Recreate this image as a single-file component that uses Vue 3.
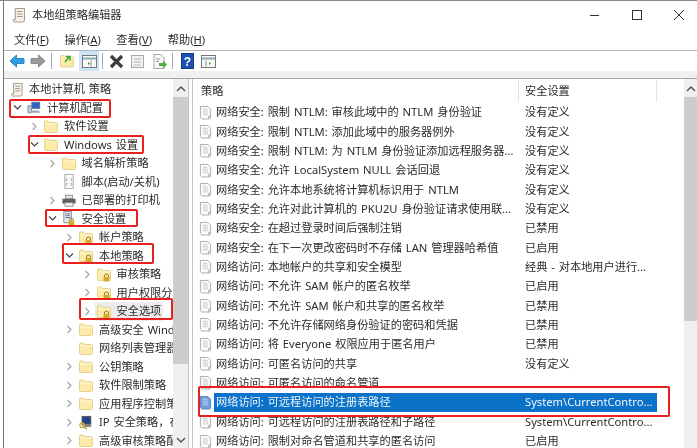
<script setup>
const menus = [['文件(', 'F'], ['操作(', 'A'], ['查看(', 'V'], ['帮助(', 'H']]
const tree = [
  { t: '本地计算机 策略', l: 0, c: '', i: 'scroll' },
  { t: '计算机配置', l: 1, c: 'd', i: 'pc' },
  { t: '软件设置', l: 2, c: 'r', i: 'folder' },
  { t: 'Windows 设置', l: 2, c: 'd', i: 'folder' },
  { t: '域名解析策略', l: 3, c: 'r', i: 'folder' },
  { t: '脚本(启动/关机)', l: 3, c: '', i: 'script' },
  { t: '已部署的打印机', l: 3, c: 'r', i: 'printer' },
  { t: '安全设置', l: 3, c: 'd', i: 'secdoc' },
  { t: '帐户策略', l: 4, c: 'r', i: 'lockfolder' },
  { t: '本地策略', l: 4, c: 'd', i: 'lockfolder' },
  { t: '审核策略', l: 5, c: 'r', i: 'lockfolder' },
  { t: '用户权限分配', l: 5, c: 'r', i: 'lockfolder' },
  { t: '安全选项', l: 5, c: 'r', i: 'lockfolder', sel: true },
  { t: '高级安全 Windows Defender 防火墙', l: 4, c: 'r', i: 'folder' },
  { t: '网络列表管理器策略', l: 4, c: '', i: 'folder' },
  { t: '公钥策略', l: 4, c: 'r', i: 'folder' },
  { t: '软件限制策略', l: 4, c: 'r', i: 'folder' },
  { t: '应用程序控制策略', l: 4, c: 'r', i: 'folder' },
  { t: 'IP 安全策略，在 本地计算机', l: 4, c: 'r', i: 'ipsec' },
  { t: '高级审核策略配置', l: 4, c: 'r', i: 'folder' }
]
const rows = [
  ['网络安全: 限制 NTLM: 审核此域中的 NTLM 身份验证', '没有定义'],
  ['网络安全: 限制 NTLM: 添加此域中的服务器例外', '没有定义'],
  ['网络安全: 限制 NTLM: 为 NTLM 身份验证添加远程服务器...', '没有定义'],
  ['网络安全: 允许 LocalSystem NULL 会话回退', '没有定义'],
  ['网络安全: 允许本地系统将计算机标识用于 NTLM', '没有定义'],
  ['网络安全: 允许对此计算机的 PKU2U 身份验证请求使用联...', '没有定义'],
  ['网络安全: 在超过登录时间后强制注销', '已禁用'],
  ['网络安全: 在下一次更改密码时不存储 LAN 管理器哈希值', '已启用'],
  ['网络访问: 本地帐户的共享和安全模型', '经典 - 对本地用户进行...'],
  ['网络访问: 不允许 SAM 帐户的匿名枚举', '已启用'],
  ['网络访问: 不允许 SAM 帐户和共享的匿名枚举', '已禁用'],
  ['网络访问: 不允许存储网络身份验证的密码和凭据', '已禁用'],
  ['网络访问: 将 Everyone 权限应用于匿名用户', '已禁用'],
  ['网络访问: 可匿名访问的共享', '没有定义'],
  ['网络访问: 可匿名访问的命名管道', ''],
  ['网络访问: 可远程访问的注册表路径', 'System\\CurrentContro...', true],
  ['网络访问: 可远程访问的注册表路径和子路径', 'System\\CurrentContro...'],
  ['网络访问: 限制对命名管道和共享的匿名访问', '已启用']
]
const marks = ['m1', 'm2', 'm3', 'm4', 'm5', 'm6']
</script>

<template>
  <div class="win">
    <svg class="defs" width="0" height="0">
      <defs>
        <symbol id="scroll" viewBox="0 0 14 16">
          <path d="M3 1.500h9.500v11.500a2 2 0 0 1-2 2H2.500a1.500 1.500 0 0 1-1-2.500h2z" fill="#f6f1e4" stroke="#a39c8c"/>
          <path d="M5 4.500h5.500M5 7h5.500M5 9.500h5.500" stroke="#a39c8c"/>
        </symbol>
        <symbol id="folder" viewBox="0 0 14 14">
          <path d="M.5 2.500a1 1 0 0 1 1-1h3l1.500 1.500h6.500a1 1 0 0 1 1 1v8a1 1 0 0 1-1 1h-11a1 1 0 0 1-1-1z" fill="#fdeaa8" stroke="#e6d290"/>
          <path d="M1 4.500h12" stroke="#fff8d8"/>
        </symbol>
        <symbol id="lockfolder" viewBox="0 0 14 14">
          <use href="#folder"/>
          <path d="M7.500 10v-1.500a2 2 0 0 1 4 0V10" fill="none" stroke="#8c7c34"/>
          <rect x="6.500" y="9.500" width="6" height="4.500" fill="#d6a928"/>
        </symbol>
        <symbol id="pc" viewBox="0 0 16 14">
          <rect x="5.500" y="1" width="9" height="7" fill="#2f63c8" stroke="#5a6f9a"/>
          <path d="M1 5h4v8H1z" fill="#c4ccd8" stroke="#7a8698"/>
          <path d="M5 13h10l-1.500-2.500H6z" fill="#9aa7bb"/>
        </symbol>
        <symbol id="script" viewBox="0 0 14 16">
          <path d="M2.500.5h9v15h-9z" fill="#fafafa" stroke="#a8a8a8"/>
          <path d="M5 4.500 4 6l1 1.500M9 4.500 10 6 9 7.500M5 9.500 4 11l1 1.500M9 9.500l1 1.500-1 1.500" fill="none" stroke="#8a8a8a"/>
        </symbol>
        <symbol id="printer" viewBox="0 0 16 14">
          <rect x="4" y="1" width="8" height="4" fill="#e6e6e6" stroke="#8a8a8a"/>
          <rect x=".5" y="5" width="15" height="5.500" fill="#5b6068"/>
          <rect x="3.500" y="9.500" width="9" height="4" fill="#f4f4f4" stroke="#8a8a8a"/>
        </symbol>
        <symbol id="secdoc" viewBox="0 0 14 16">
          <path d="M1.500.5h8v12h-8z" fill="#e8ecf2" stroke="#7d8798"/>
          <path d="M3 3h5M3 5h5M3 7h5" stroke="#5f6d84"/>
          <path d="M7.500 11v-1.500a2 2 0 0 1 4 0V11" fill="none" stroke="#8c7c34"/>
          <rect x="6.500" y="10.500" width="6" height="5" fill="#d6a928"/>
        </symbol>
        <symbol id="ipsec" viewBox="0 0 16 16">
          <rect x="3.500" y="1" width="10" height="9" fill="#27408b" stroke="#555"/>
          <path d="M4 11h10v2H4z" fill="#777"/>
          <circle cx="3.500" cy="11" r="2.500" fill="none" stroke="#c9b22c" stroke-width="1.500"/>
          <path d="M5 12.500 9 15.500" stroke="#c9b22c" stroke-width="1.800"/>
        </symbol>
        <symbol id="policy" viewBox="0 0 14 16">
          <path d="M1.500 1.500h8l3 3v9a1.500 1.500 0 0 1-1.500 1.500H3l-1.500-1.500z" fill="#fcfcfc" stroke="#a8a8a8"/>
          <path d="M4 4.500h5M4 6.500h6M4 8.500h6M4 10.500h6" stroke="#c8c8c8"/>
          <path d="M10.500 15V12h2" fill="#ddd" stroke="#a8a8a8"/>
        </symbol>
        <symbol id="policysel" viewBox="0 0 14 16">
          <path d="M1.500 1.500h8l3 3v9a1.500 1.500 0 0 1-1.500 1.500H3l-1.500-1.500z" fill="#6f9fd8" stroke="#4f82c0"/>
          <path d="M4 4.500h5M4 6.500h6M4 8.500h6M4 10.500h6" stroke="#bcd4ee"/>
        </symbol>
      </defs>
    </svg>

    <header class="title">
      <svg width="14" height="16"><use href="#scroll"/></svg>
      <span class="t-text">本地组策略编辑器</span>
      <div class="ctrls">
        <svg width="12" height="12"><path d="M1 6.500h9" stroke="#333"/></svg>
        <svg width="12" height="12"><rect x="1.500" y="1.500" width="9" height="9" fill="none" stroke="#333"/></svg>
        <svg width="12" height="12"><path d="M1 1l10 10M11 1 1 11" stroke="#333"/></svg>
      </div>
    </header>

    <nav class="menu">
      <span v-for="m in menus" :key="m[1]">{{ m[0] }}<u>{{ m[1] }}</u>)</span>
    </nav>

    <div class="tools">
      <svg width="16" height="14"><path d="M1 7l6.500-6v3.500H15v5H7.500V13z" fill="#2f9fe0" stroke="#2a86c4"/></svg>
      <svg width="16" height="14"><path d="M15 7 8.500 1v3.500H1v5h7.500V13z" fill="#9a9a9a" stroke="#8c8c8c"/></svg>
      <i class="sep sep-a"></i>
      <svg width="14" height="14"><use href="#folder"/><path d="M5 8 9 3M6 2.500h4v4" fill="none" stroke="#3aa53a" stroke-width="1.500"/></svg>
      <span class="on"><svg width="15" height="13"><rect x=".5" y=".5" width="14" height="12" fill="#f8f8f8" stroke="#777"/><path d="M1 3.500h13" stroke="#8ab" stroke-width="2"/><path d="M9 5.500v6" stroke="#888"/><path d="M6 7v3l2-1.500z" fill="#3a9a3a"/></svg></span>
      <i class="sep sep-b"></i>
      <svg class="x" width="15" height="15"><path d="M2 2l11 11M13 2 2 13" stroke="#3c3c3c" stroke-width="3.200"/></svg>
      <svg class="prop" width="15" height="15"><rect x="1.500" y="1.500" width="12" height="12" fill="#f2f2f2" stroke="#a8a8a8"/><path d="M4 5h7M4 8h7M4 11h7" stroke="#b4b4b4"/></svg>
      <svg width="15" height="15"><path d="M2 .5h7l3 3v11H2z" fill="#f8f8f8" stroke="#a8a8a8"/><path d="M4 5h4M4 7.500h3" stroke="#999"/><path d="M7 9h4V6.500l4 4-4 4V12H7z" fill="#4cae4c"/></svg>
      <i class="sep sep-a"></i>
      <svg width="13" height="16"><rect x=".5" y=".5" width="12" height="15" fill="#1f4fb0" stroke="#173b85"/><text x="6.500" y="12.500" text-anchor="middle" font-family="Liberation Sans" font-weight="700" font-size="12" fill="#fff">?</text></svg>
      <svg class="act" width="15" height="13"><rect x=".5" y=".5" width="14" height="12" fill="#f8f8f8" stroke="#777"/><path d="M1 3.500h13" stroke="#8ab" stroke-width="2"/><path d="M5 5.500v6" stroke="#888"/><path d="M8 7v3l2-1.500z" fill="#3a9a3a"/></svg>
    </div>

    <div class="band"></div>

    <main class="panes">
      <section class="left">
        <div class="tree">
          <div v-for="n in tree" :key="n.t" class="node" :class="'lv' + n.l">
            <svg v-if="n.c" class="chev" width="9" height="9" viewBox="0 0 9 9">
              <path v-if="n.c === 'd'" d="M1 2.500 4.500 6 8 2.500" fill="none" stroke="#444" stroke-width="1.200"/>
              <path v-else d="M2.500 1 6 4.500 2.500 8" fill="none" stroke="#a6a6a6" stroke-width="1.200"/>
            </svg>
            <span v-else class="chev"></span>
            <span class="item" :class="{ picked: n.sel }">
              <svg width="14" height="15"><use :href="'#' + n.i"/></svg>
              <span class="ntext">{{ n.t }}</span>
            </span>
          </div>
        </div>
        <div class="sbar">
          <svg class="arr" width="10" height="8"><path d="M1 6 5 2l4 4" fill="none" stroke="#555" stroke-width="1.500"/></svg>
          <div class="thumb"></div>
          <svg class="arr" width="10" height="8"><path d="M1 2l4 4 4-4" fill="none" stroke="#555" stroke-width="1.500"/></svg>
        </div>
      </section>
      <div class="split"></div>
      <section class="right">
        <div class="list">
          <div class="head">
            <span class="h1">策略</span>
            <span class="h2">安全设置</span>
          </div>
          <div v-for="r in rows" :key="r[0]" class="row" :class="{ cur: r[2] }">
            <svg class="pico" width="13" height="15"><use :href="r[2] ? '#policysel' : '#policy'"/></svg>
            <div class="band-sel">
              <span class="c1">{{ r[0] }}</span>
              <span class="c2">{{ r[1] }}</span>
            </div>
          </div>
        </div>
        <div class="sbar sbar-r">
          <svg class="arr" width="10" height="8"><path d="M1 6 5 2l4 4" fill="none" stroke="#555" stroke-width="1.500"/></svg>
          <div class="thumb"></div>
        </div>
      </section>
    </main>

    <div v-for="m in marks" :key="m" class="mark" :class="m"></div>
  </div>
</template>

<style>
html, body { margin: 0; background: #fff; overflow: hidden; }
</style>

<style scoped>
.win {
  position: relative;
  width: 697px;
  height: 448px;
  overflow: hidden;
  background: #fff;
  box-sizing: border-box;
  border-top: 1px solid #8a8a8a;
  padding-left: 4px;
  color: #2b2b2b;
  font: 11.2px/18px "Noto Sans", "Noto Sans CJK SC", sans-serif;
  word-spacing: 1px;
  filter: blur(0.35px);
}
.win::before {
  content: "";
  position: absolute;
  left: 3px;
  top: 0;
  bottom: 0;
  width: 1px;
  background: #777;
}
.defs { position: absolute; }
svg { display: block; flex: none; }
.title {
  height: 27px;
  display: flex;
  align-items: center;
  padding-left: 8px;
}
.t-text { margin-left: 6px; }
.ctrls {
  margin-left: auto;
  display: flex;
  gap: 30px;
  padding-right: 12px;
}
.menu {
  height: 20px;
  padding-top: 2px;
  display: flex;
  align-items: center;
  gap: 15.6px;
  padding-left: 10px;
  border-bottom: 1px solid #b4b4b4;
}
.tools {
  height: 20px;
  display: flex;
  align-items: center;
  gap: 5px;
  padding-left: 5px;
}
.sep { width: 1px; height: 16px; background: #a8a8a8; }
.sep-a { margin-right: 3px; }
.sep-b { margin-right: 1px; }
.on {
  width: 20px;
  height: 20px;
  display: flex;
  align-items: center;
  justify-content: center;
  background: #cde4f7;
  margin-right: -2px;
}
.x { margin-right: 1px; }
.prop { margin-right: 2px; }
.act { margin-left: 2px; }
.band {
  height: 7px;
  background: #f0f0f0;
  border-bottom: 1px solid #a6a6a6;
}
.panes {
  height: 369px;
  display: flex;
}
.left {
  width: 184px;
  display: flex;
  flex: none;
}
.tree { flex: 1; min-width: 0; overflow: hidden; padding-top: 1px; }
.node {
  height: 18.5px;
  display: flex;
  align-items: center;
  white-space: nowrap;
}
.lv0 { padding-left: 0; }
.lv1 { padding-left: 9px; }
.lv2 { padding-left: 26px; }
.lv3 { padding-left: 43.5px; }
.lv4 { padding-left: 61px; }
.lv5 { padding-left: 78.5px; }
.chev { width: 9px; height: 9px; flex: none; }
.lv0 .chev { display: none; }
.item {
  display: flex;
  align-items: center;
  height: 100%;
  margin-left: 3px;
  padding: 0 2px;
}
.lv0 .item { margin-left: 4px; }
.ntext { margin-left: 6px; }
.lv0 .ntext { margin-left: 5px; }
.picked { background: #ececec; }
.sbar {
  width: 15px;
  flex: none;
  background: #f0f0f0;
  display: flex;
  flex-direction: column;
  align-items: center;
}
.arr { flex: none; margin: 6px 0 4px; }
.thumb {
  width: 100%;
  height: 267px;
  background: #cdcdcd;
  margin-bottom: auto;
}
.split {
  width: 5px;
  flex: none;
  background: #fff;
  border-left: 1px solid #c4c4c4;
  border-right: 1px solid #c4c4c4;
  box-sizing: border-box;
}
.right { flex: 1; min-width: 0; display: flex; }
.list { flex: 1; min-width: 0; overflow: hidden; }
.head {
  height: 23.5px;
  display: flex;
  align-items: center;
}
.h1 { width: 326px; padding-left: 8px; box-sizing: border-box; border-right: 1px solid #e2e2e2; height: 22px; line-height: 22px; }
.h2 { width: 138px; padding-left: 6px; box-sizing: border-box; border-right: 1px solid #e2e2e2; height: 22px; line-height: 22px; }
.row {
  height: 19.35px;
  display: flex;
  align-items: center;
  white-space: nowrap;
}
.pico { margin-left: 6px; }
.band-sel {
  display: flex;
  align-items: center;
  margin-left: 2px;
  height: 100%;
  width: 443px;
  padding-left: 2px;
  box-sizing: border-box;
}
.cur .band-sel { background: #0a72c8; color: #f2f6fb; }
.c1 { width: 309px; flex: none; overflow: hidden; }
.c2 { flex: 1; }
.sbar-r { width: 13px; }
.sbar-r .thumb { height: 224px; }
.mark {
  position: absolute;
  border: 2px solid #e8201f;
  border-radius: 2px;
  box-sizing: border-box;
}
.m1 { left: 9px; top: 98px; width: 102px; height: 19px; }
.m2 { left: 28px; top: 134px; width: 116px; height: 19px; }
.m3 { left: 45px; top: 208px; width: 93px; height: 18px; }
.m4 { left: 62px; top: 242px; width: 92px; height: 21px; }
.m5 { left: 79px; top: 297px; width: 94px; height: 22px; }
.m6 { left: 198px; top: 385px; width: 472px; height: 31px; }
</style>
